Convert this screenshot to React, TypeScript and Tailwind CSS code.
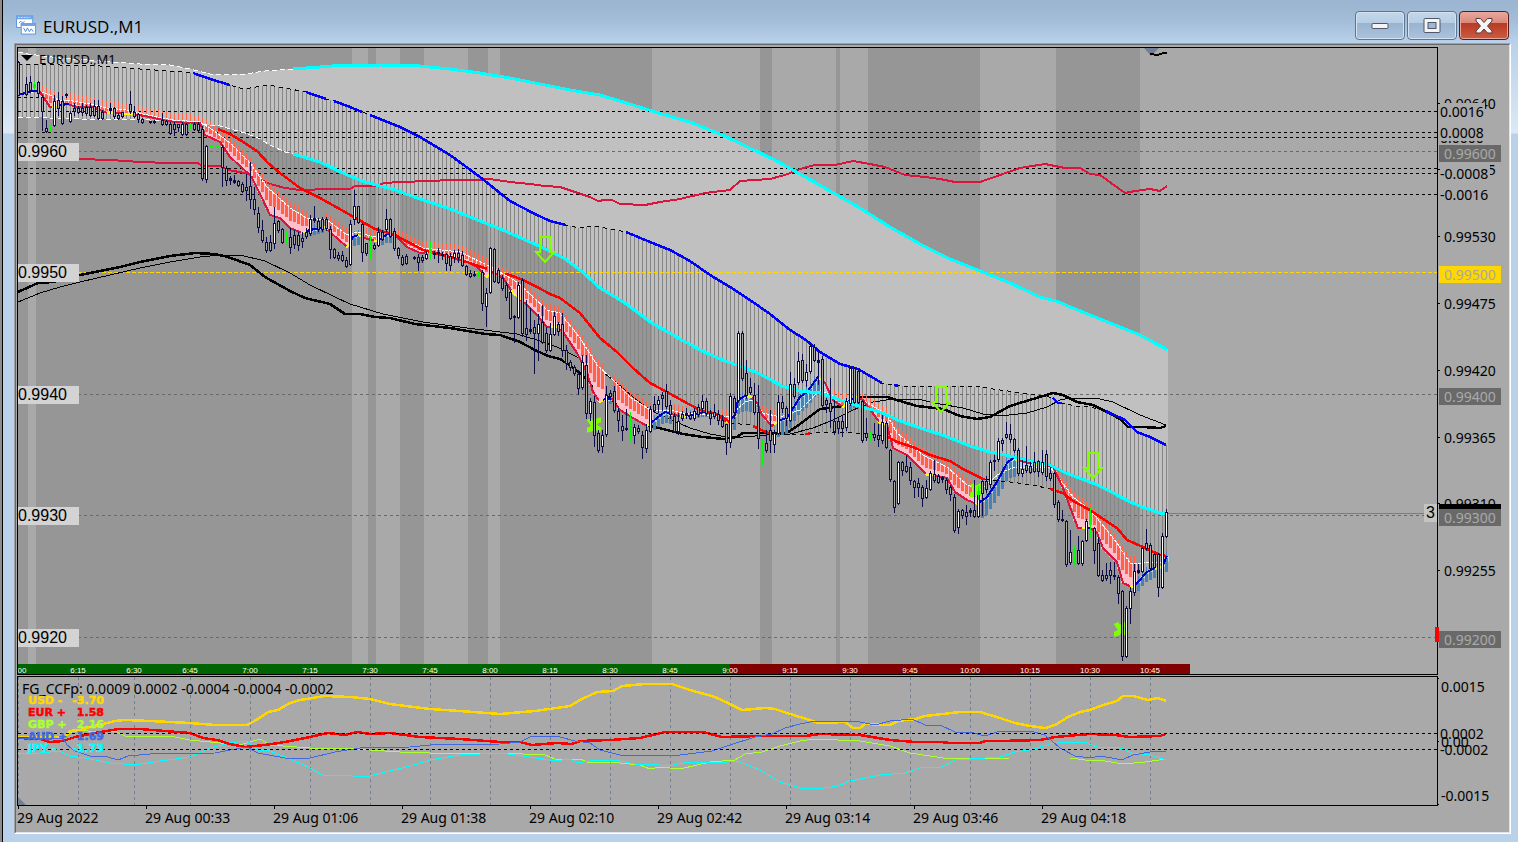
import React from "react";

type Pt = [number, number];

const parse = (s: string): Pt[] =>
  s.trim().split(/\s+/).map((p) => p.split(",").map(Number) as Pt);

const valueAt = (pts: Pt[], x: number): number => {
  if (x <= pts[0][0]) return pts[0][1];
  for (let i = 1; i < pts.length; i++) {
    if (x <= pts[i][0]) {
      const [x0, y0] = pts[i - 1];
      const [x1, y1] = pts[i];
      return y0 + ((y1 - y0) * (x - x0)) / (x1 - x0 || 1);
    }
  }
  return pts[pts.length - 1][1];
};

const slice = (s: string, from: number, to: number): string => {
  const pts = parse(s);
  const inner = pts.filter(([x]) => x > from && x < to);
  const all: Pt[] = [[from, valueAt(pts, from)], ...inner, [to, valueAt(pts, to)]];
  return all.map(([x, y]) => `${x},${y.toFixed(1)}`).join(" ");
};

const UPPER =
  "18,52 28,54 60,58 100,61 140,64 170,65 190,69 210,74 225,75 245,74 265,71 293,69 320,67 345,65 380,65 420,66 450,69 480,73 510,78 540,84 570,90 600,95 630,104 655,112 690,122 720,134 750,148 775,160 800,174 830,191 860,208 890,227 920,244 950,259 980,271 1010,283 1040,297 1056,301 1090,315 1115,325 1140,335 1166,349";
const LOWER =
  "18,117 40,117 50,118 80,119 120,119 150,120 180,122 200,124 220,126 245,133 258,138 270,145 285,152 293,154 320,162 345,174 365,182 395,190 423,200 450,209 480,221 505,231 530,242 548,250 565,259 580,270 600,288 625,303 650,322 680,339 700,350 725,361 740,366 760,374 782,386 800,391 820,393 840,400 862,407 880,412 900,421 920,428 945,436 970,446 990,452 1010,456 1030,461 1050,465 1066,473 1095,484 1115,494 1130,502 1145,508 1160,513 1166,514";
const MID =
  "18,64 60,65 100,66 140,69 170,71 193,73 210,79 230,85 240,88 250,88 268,85 285,88 306,92 326,99 334,101 350,107 362,112 375,117 400,127 420,137 450,155 480,177 510,201 535,214 550,221 566,225 580,228 595,226 610,229 626,232 650,242 670,250 690,261 710,275 730,287 750,300 770,314 790,330 806,340 820,352 840,364 858,369 870,376 882,383 900,386 915,386 935,386 960,386 980,387 1000,390 1015,392 1030,394 1045,396 1053,398 1058,403 1062,403 1075,406 1090,407 1106,411 1125,420 1137,432 1150,437 1166,445";
const BASE =
  "18,97 40,97 70,108 120,116 200,123 218,129 230,134 245,143 258,152 268,163 280,173 300,188 320,198 345,212 352,216 375,229 395,235 423,250 450,257 467,262 487,269 510,275 523,280 537,287 550,294 560,298 580,313 600,338 617,352 633,368 650,383 667,392 683,401 700,410 717,414 727,420 730,423 750,425 755,427 768,433 780,434 807,434 820,432 853,433 867,434 888,437 897,442 913,447 930,455 950,461 963,469 983,479 1010,482 1033,485 1050,489 1063,493 1073,501 1090,510 1100,517 1117,528 1127,540 1143,547 1160,555 1166,556";
const CRIMSON =
  "79,159 110,160 140,162 170,163 198,163 202,166 220,166 228,170 245,173 258,178 270,184 285,188 300,190 330,189 350,189 355,186 375,186 385,183 400,182 430,181 450,180 475,180 490,179 510,182 530,184 545,186 560,187 575,192 590,197 598,201 605,200 612,200 620,204 645,205 660,202 680,199 705,193 730,190 740,181 770,179 785,175 800,169 815,165 835,165 853,161 870,164 885,167 905,175 925,177 940,179 955,182 980,182 1000,175 1020,168 1045,164 1065,168 1080,168 1090,174 1100,175 1118,188 1125,193 1135,191 1150,189 1160,191 1167,186";
const THICK =
  "18,292 38,283 53,282 80,275 100,271 120,267 140,262 170,256 195,253 215,254 228,257 250,265 265,277 290,291 305,298 330,304 345,314 360,314 375,317 390,318 415,324 450,328 485,334 500,335 520,342 535,350 548,356 560,359 575,369 590,382 598,392 607,396 620,406 635,417 647,425 663,429 683,434 703,437 723,439 737,437 743,433 767,433 787,433 800,424 820,409 843,406 860,397 887,397 900,401 917,406 943,409 960,416 977,419 990,417 1010,406 1033,399 1053,393 1063,395 1077,402 1093,405 1107,412 1120,419 1128,427 1143,427 1160,428 1166,426";
const THIN =
  "18,302 40,293 60,287 80,282 110,275 140,268 170,262 200,257 220,255 240,255 265,261 290,273 310,285 335,297 350,304 383,314 423,322 467,328 517,334 537,340 557,347 577,357 600,370 617,383 633,397 650,410 667,418 690,428 710,434 727,437 743,437 767,435 790,434 813,428 833,420 853,410 873,402 893,399 917,399 940,404 963,408 983,414 1000,416 1027,413 1047,407 1060,400 1070,398 1100,399 1113,402 1140,415 1166,425";
const FAST =
  "18,95 33,91 40,92 50,107 57,106 67,104 77,107 93,107 107,113 133,114 150,117 167,121 187,123 200,123 205,135 220,142 230,157 250,175 253,180 262,198 270,215 280,218 290,228 302,233 310,230 325,227 330,232 347,247 353,237 358,235 367,239 377,241 388,234 393,235 397,237 407,247 420,253 430,252 447,257 463,260 477,267 487,277 493,272 503,278 513,293 527,305 537,315 547,327 557,327 563,332 577,353 587,373 593,392 600,402 605,399 612,399 620,410 633,418 647,426 657,418 665,412 675,415 683,417 697,414 703,412 713,413 727,422 735,415 738,400 745,396 750,396 757,403 762,415 772,426 780,420 787,418 800,397 807,392 818,377 825,383 833,400 843,407 850,400 857,397 863,400 880,423 887,425 893,448 907,455 927,475 933,475 947,478 955,492 967,500 977,504 987,497 997,482 1007,463 1013,458 1020,461 1030,463 1043,465 1053,467 1063,488 1070,507 1078,528 1088,528 1092,529 1097,533 1103,548 1117,562 1123,583 1132,587 1138,582 1147,572 1155,568 1162,567 1167,556";
const SLOW =
  "18,95 38,91 50,95 58,100 67,100 90,104 107,108 127,110 143,114 173,120 200,122 213,130 230,143 250,163 267,187 290,208 307,218 327,220 347,235 358,232 373,237 393,234 423,248 460,252 493,268 517,282 533,297 547,310 560,313 580,338 597,365 610,377 630,397 650,410 670,410 683,413 727,417 731,415 745,402 753,400 763,413 780,417 800,410 820,390 843,401 860,398 887,415 897,433 923,455 947,467 967,485 980,490 1000,473 1013,468 1050,467 1073,497 1090,510 1097,518 1117,543 1130,563 1143,563 1166,562";

const FAST_COLORS: [number, number, string][] = [
  [18, 38, "#0000cd"], [38, 52, "#dc143c"], [52, 60, "#ffff00"], [60, 69, "#0000cd"], [69, 107, "#dc143c"],
  [107, 114, "#ffff00"], [114, 121, "#dc143c"], [121, 134, "#ffff00"], [134, 301, "#dc143c"], [301, 307, "#ffff00"],
  [307, 323, "#0000cd"], [323, 328, "#ffff00"], [328, 346, "#dc143c"], [346, 351, "#ffff00"], [351, 358, "#0000cd"],
  [358, 363, "#ffff00"], [363, 374, "#dc143c"], [374, 379, "#ffff00"], [379, 393, "#0000cd"], [393, 427, "#dc143c"],
  [427, 433, "#ffff00"], [433, 445, "#dc143c"], [445, 451, "#ffff00"], [451, 485, "#dc143c"], [485, 490, "#ffff00"],
  [490, 511, "#dc143c"], [511, 521, "#ffff00"], [521, 550, "#dc143c"], [550, 558, "#ffff00"], [558, 599, "#dc143c"],
  [599, 603, "#ffff00"], [603, 611, "#0000cd"], [611, 647, "#dc143c"], [647, 651, "#ffff00"], [651, 669, "#0000cd"],
  [669, 680, "#dc143c"], [680, 688, "#ffff00"], [688, 706, "#0000cd"], [706, 726, "#dc143c"], [726, 731, "#ffff00"],
  [731, 746, "#0000cd"], [746, 752, "#ffff00"], [752, 774, "#dc143c"], [774, 778, "#ffff00"], [778, 819, "#0000cd"],
  [819, 823, "#ffff00"], [823, 842, "#dc143c"], [842, 846, "#ffff00"], [846, 856, "#0000cd"], [856, 860, "#ffff00"],
  [860, 879, "#dc143c"], [879, 887, "#ffff00"], [887, 926, "#dc143c"], [926, 934, "#ffff00"], [934, 975, "#dc143c"],
  [975, 979, "#ffff00"], [979, 1014, "#0000cd"], [1014, 1018, "#ffff00"], [1018, 1032, "#dc143c"], [1032, 1048, "#ffff00"],
  [1048, 1082, "#dc143c"], [1082, 1087, "#ffff00"], [1087, 1091, "#0000cd"], [1091, 1130, "#dc143c"], [1130, 1135, "#ffff00"],
  [1135, 1155, "#0000cd"], [1155, 1162, "#ffff00"], [1162, 1167, "#0000cd"],
];

// from, to, bar height of the rising histogram
const RISING: [number, number, number][] = [
  [307, 326, 4], [351, 363, 8], [379, 393, 6], [603, 612, 3], [651, 673, 8], [688, 712, 3], [731, 751, 13],
  [778, 822, 14], [847, 859, 8], [979, 1017, 16], [1135, 1160, 8], [1160, 1168, 14],
];

const BLUE_RANGES: [number, number][] = [
  [193, 230], [306, 326], [334, 362], [370, 566], [626, 882], [894, 898], [1053, 1062], [1106, 1166],
];
const RED_RANGES: [number, number][] = [
  [218, 487], [505, 730], [753, 770], [805, 810], [888, 985], [1050, 1166],
];

const BANDS: [number, number][] = [
  [18, 28], [36, 352], [368, 376], [400, 424], [468, 488], [500, 652], [760, 772], [836, 840], [868, 980], [1056, 1140],
];

// x : high, open/close top, open/close bottom, low ("w" marks a rising bar)
const CANDLES = `
18:61,62,95,95 26:77,84,94,95 30:76,82,90,92 38:81,82,93,96 42:95,97,111,130 46:120,128,131,132 54:95,101,125,126w
58:92,100,108,115 62:96,101,123,124 66:93,94,95,97 70:111,113,121,122w 74:103,108,111,115 78:106,108,112,113
82:103,108,112,115 86:105,107,113,115 90:103,107,115,116 94:100,106,115,116 98:100,106,118,119 102:110,112,118,119
110:103,108,110,113 114:107,108,116,118 118:113,115,118,119 122:112,112,116,117 130:91,104,111,113 134:106,112,116,117
138:113,114,119,122 142:118,119,122,123 150:121,121,122,123 154:120,121,122,123 162:113,120,124,125 166:120,121,124,125
170:122,124,133,134 174:122,124,129,135 178:124,124,127,131 182:122,124,134,135w 186:123,124,134,135 194:122,124,129,130
198:122,124,130,131 202:126,129,178,180 206:145,146,179,182w 222:145,147,167,186 226:166,168,180,185 230:176,178,180,184
234:175,180,182,183 238:180,181,185,186 242:182,184,191,192 246:174,187,190,200 250:162,186,199,208 254:187,199,209,214
258:207,213,227,232 262:220,230,240,242 266:237,242,250,252 270:235,242,250,251 274:207,223,243,248w 278:220,221,230,232
282:228,229,242,243 290:228,237,247,253 294:230,235,244,248 298:232,235,245,250 302:232,238,241,247 306:228,232,236,238
310:215,219,233,235w 314:206,218,220,222 318:218,221,229,231 322:217,219,229,231 326:217,219,228,230 330:226,229,249,258
334:248,249,257,258 338:252,255,258,260 342:251,255,260,261 346:257,260,266,267 350:220,224,264,265w 354:190,206,219,224w
358:206,206,222,223 362:223,224,252,261 366:245,243,253,255 374:243,245,248,249 378:227,232,245,246w 382:230,232,239,240
386:209,219,229,231w 390:218,219,236,237 394:228,231,248,250 398:247,248,255,258 402:255,257,264,265 406:254,256,263,264
414:256,257,258,259 418:254,257,262,270 422:255,257,260,262 426:251,254,258,259w 434:251,253,254,258 438:248,252,253,262
442:252,254,255,259 446:253,254,263,270 450:253,256,265,270 454:250,253,257,262w 458:249,253,257,262 462:251,255,265,266
466:265,266,274,275 470:270,273,276,277 474:271,274,275,276 482:270,272,303,310 486:288,293,306,326w 490:247,248,292,293w
494:248,249,281,282 498:268,270,282,283 502:275,278,288,290 506:282,285,297,300 510:290,292,318,319 514:315,316,317,342
518:282,285,317,318w 522:278,280,333,336 526:300,328,334,340 530:308,329,331,333 534:320,327,333,373 538:314,324,333,360w
542:305,322,342,343 546:327,333,350,352 550:323,334,350,351w 554:312,316,334,335w 558:322,324,331,335 562:313,324,350,356
566:345,350,363,369 570:360,362,367,370 574:365,367,373,375 578:370,374,388,394 582:355,362,387,389w 586:355,365,413,418
590:398,401,413,420w 594:396,402,435,446 598:430,433,450,452 602:430,435,446,452w 606:386,395,434,436w 610:390,393,396,397
614:386,391,410,412 618:408,411,420,431 622:415,426,430,440 626:409,428,429,430 634:424,427,435,443w 638:425,428,431,433
642:431,435,447,458 646:424,430,448,452w 650:406,409,431,432w 654:396,404,410,412 658:396,400,404,412w 662:392,395,398,410
666:384,391,406,408 670:400,405,414,418 674:413,416,431,432 678:413,421,431,434w 682:411,414,418,420 686:408,413,415,418
690:412,415,418,419 694:408,411,418,420w 698:404,407,414,416 702:395,401,408,412w 706:398,401,413,415 710:410,413,418,424
714:404,412,416,418 718:410,414,420,424 722:415,420,426,427 726:424,424,442,454 730:393,396,442,447w 734:396,398,412,418
738:331,333,400,402w 742:331,333,378,380 746:360,373,395,398 750:378,387,392,394 754:383,395,412,414 758:385,412,438,448
766:430,443,450,452 770:410,430,440,452 774:430,433,444,452w 778:395,402,433,434w 782:396,402,408,412 786:406,408,418,425
790:372,384,420,421w 794:378,384,396,398 798:352,361,382,384w 802:354,360,380,382 806:364,372,380,386w 810:344,346,371,373w
814:344,347,360,361 818:352,360,362,384 822:356,359,405,407 826:398,400,404,412 830:378,403,411,427 834:400,421,431,434
838:418,421,428,433 842:415,421,428,436 846:398,401,427,430w 850:366,368,403,405w 854:367,368,402,403 858:370,371,402,403
862:400,401,440,442 866:418,433,437,440 874:423,434,437,440 878:424,435,439,446 882:415,422,440,443w 886:421,423,447,448
890:449,450,479,481 894:480,481,507,512 898:461,462,503,504w 902:461,462,470,475 906:455,466,471,472 910:462,467,480,484
914:480,481,487,497 918:478,483,487,496 922:485,487,498,506 926:480,488,497,498w 930:471,473,489,490w 934:460,474,480,482
938:474,476,482,483 942:476,477,479,482 946:478,480,489,493 950:485,487,494,500 954:494,497,530,532 958:509,511,527,533w
962:509,510,515,518 966:505,512,516,524 970:508,510,512,516 974:480,510,516,517 978:491,493,516,517w 982:480,481,493,515
986:476,481,489,492 990:460,462,484,487w 994:455,460,461,470 998:438,441,459,461w 1002:438,440,443,450 1006:422,434,437,438
1010:424,434,439,442 1014:438,439,450,452 1018:448,450,473,475 1022:460,469,473,476w 1026:446,465,470,472 1030:462,466,472,473
1034:452,462,471,472 1038:460,461,471,476 1042:450,462,472,474w 1046:450,454,476,480 1050:467,473,478,480 1054:472,473,504,507
1058:500,502,519,521 1062:510,519,520,521 1066:520,521,564,566 1070:530,552,562,564w 1078:536,550,563,564 1082:540,541,563,565w
1086:519,521,540,541w 1094:527,528,550,563 1098:537,543,575,576 1102:570,575,580,581 1106:563,575,578,580 1110:562,570,575,583
1114:562,575,576,579 1118:575,577,593,603 1122:590,591,656,660 1126:606,608,656,657w 1130:587,591,608,623w 1134:564,571,592,595w
1138:564,570,572,573 1142:547,548,571,572w 1146:529,543,548,550 1150:543,545,568,570 1154:553,554,567,568 1158:553,554,587,596
1162:533,536,587,588w 1166:509,512,536,537w`
  .trim()
  .split(/\s+/)
  .map((c) => {
    const [x, rest] = c.split(":");
    const up = rest.endsWith("w");
    const [high, top, bottom, low] = rest.replace("w", "").split(",").map(Number);
    return { x: Number(x), high, top, bottom, low, up };
  });

const GREEN_BARS = [
  [34, 82, 90], [50, 125, 132], [190, 123, 130], [286, 231, 243], [370, 236, 259], [430, 242, 260], [478, 272, 277],
  [630, 412, 441], [762, 440, 465], [870, 431, 442], [978, 486, 500], [1074, 546, 566], [1090, 508, 537],
];

const TIME_MARKS: [number, string][] = [
  [22, "00"], [78, "6:15"], [134, "6:30"], [190, "6:45"], [250, "7:00"], [310, "7:15"], [370, "7:30"], [430, "7:45"],
  [490, "8:00"], [550, "8:15"], [610, "8:30"], [670, "8:45"], [730, "9:00"], [790, "9:15"], [850, "9:30"], [910, "9:45"],
  [970, "10:00"], [1030, "10:15"], [1090, "10:30"], [1150, "10:45"],
];

const LEVELS: [number, string, string][] = [
  [151, "0.9960", "#696969"], [272, "0.9950", "#ffd700"], [394, "0.9940", "#696969"], [515, "0.9930", "#696969"],
  [637, "0.9920", "#696969"],
];

const mid = parse(MID);
const base = parse(BASE);
const lowPts = parse(LOWER);
const fast = parse(FAST);
const slow = parse(SLOW);

const STEPS = Array.from({ length: 288 }, (_, i) => 18 + i * 4);

function Arrow({ x, y }: { x: number; y: number }) {
  return (
    <path
      d={`M${x - 5} ${y + 1}h10v15h4l-9 10l-9 -10h4z`}
      fill="none"
      stroke="#7fff00"
      strokeWidth="2"
    />
  );
}

function Cross({ x, y }: { x: number; y: number }) {
  return (
    <path
      d={`M${x - 5} ${y - 6}q2 4 5 6q2 -5 7 -5M${x - 7} ${y + 5}q5 0 7 -5q3 4 7 5`}
      fill="none"
      stroke="#7fff00"
      strokeWidth="5"
    />
  );
}

function Line({ points, color, width = 2.5, dash }: { points: string; color: string; width?: number; dash?: string }) {
  return (
    <polyline points={points} fill="none" stroke={color} strokeWidth={width} strokeDasharray={dash} shapeRendering="crispEdges" />
  );
}

function PriceChart() {
  return (
    <svg className="block h-full w-full" role="img" aria-label="EURUSD one minute chart">
      <g transform="translate(-18 -48)">
        <g shapeRendering="crispEdges">
          {BANDS.map(([a, b]) => (
            <rect key={a} x={a} y="48" width={b - a} height="616" fill="#969696" />
          ))}
          <polygon points={`${UPPER} ${[...lowPts].reverse().map((p) => p.join(",")).join(" ")}`} fill="#c0c0c0" />
          <rect x="1166" y="349" width="2" height="165" fill="#c0c0c0" />
          {STEPS.map((x) => {
            const a = valueAt(mid, x);
            const b = x < 218 ? valueAt(lowPts, x) : valueAt(base, x);
            return <rect key={x} x={x} y={Math.round(a)} width="1" height={Math.max(0, Math.round(b - a))} fill="#868686" />;
          })}
          {LEVELS.map(([y, , color]) => (
            <line key={y} x1="18" x2="110%" y1={y + 0.5} y2={y + 0.5} stroke={color} strokeDasharray={y === 272 ? "4 2" : "3 3"} />
          ))}
          {[111, 132, 137, 168, 173, 194].map((y) => (
            <line key={y} x1="18" x2="110%" y1={y + 0.5} y2={y + 0.5} stroke="#000" strokeDasharray="3 3" />
          ))}
          <line x1="18" x2="40" y1="97.5" y2="97.5" stroke="#000" strokeDasharray="3 3" />
          <line x1="1168" x2="110%" y1="513.5" y2="513.5" stroke="#708090" />
        </g>

        <Line points={slice(CRIMSON, 79, 1167)} color="#dc143c" width={2} />
        <Line points={THIN} color="#000" width={1} />
        <Line points={THICK} color="#000" />

        <g shapeRendering="crispEdges">
          {STEPS.filter((x) => x > 38).map((x) => {
            const f = valueAt(fast, x + 1);
            const w = valueAt(slow, x + 1);
            const rise = RISING.find(([a, b]) => x >= a && x < b);
            if (rise) {
              return (
                <React.Fragment key={x}>
                  <rect x={x - 1} y={Math.round(f)} width="4" height={Math.max(2, Math.round(w - f))} fill="#add8e6" />
                  <rect x={x} y={Math.round(f - 5)} width="1" height="8" fill="#4682b4" />
                  <rect x={x - 1} y={Math.round(f + 2)} width="3" height={rise[2]} fill="#4682b4" />
                </React.Fragment>
              );
            }
            const d = f - w;
            if (d >= 0) {
              return (
                <React.Fragment key={x}>
                  <rect x={x - 1} y={Math.round(w)} width="4" height={Math.round(d)} fill="#ffc0cb" />
                  <rect x={x} y={Math.round(w - 7)} width="1" height="9" fill="#ff6347" />
                  <rect x={x - 1} y={Math.round(w)} width="3" height={Math.max(3, Math.round(d * 0.6))} fill="#ff6347" />
                </React.Fragment>
              );
            }
            return <rect key={x} x={x - 1} y={Math.round(f)} width="4" height={Math.round(-d)} fill="#add8e6" />;
          })}
        </g>

        <Line points={SLOW} color="#fff" width={1} dash="3 1" />
        <Line points={slice(UPPER, 18, 293)} color="#fff" width={1} dash="5 3" />
        <Line points={slice(LOWER, 18, 293)} color="#fff" width={1} dash="5 3" />
        <Line points={MID} color="#000" width={1} dash="4 4" />
        <Line points={slice(BASE, 730, 888)} color="#000" width={1} dash="4 4" />
        <Line points={slice(BASE, 985, 1050)} color="#000" width={1} dash="4 4" />
        {FAST_COLORS.map(([a, b, c]) => (
          <Line key={a} points={slice(FAST, a, b)} color={c} width={2} />
        ))}
        {RED_RANGES.map(([a, b]) => (
          <Line key={a} points={slice(BASE, a, b)} color="#ff0000" />
        ))}
        {BLUE_RANGES.map(([a, b]) => (
          <Line key={a} points={slice(MID, a, b)} color="#0000ff" />
        ))}
        <Line points={slice(UPPER, 293, 1167)} color="#00ffff" width={3} />
        <Line points={slice(LOWER, 293, 1167)} color="#00ffff" width={3} />

        {[[545, 236], [941, 386], [1093, 452]].map(([x, y]) => (
          <Arrow key={x} x={x} y={y} />
        ))}
        {[[594, 425], [977, 490], [1121, 629]].map(([x, y]) => (
          <Cross key={x} x={x} y={y} />
        ))}

        <g shapeRendering="crispEdges">
          {CANDLES.map((c) => (
            <React.Fragment key={c.x}>
              <rect x={c.x} y={c.high} width="1" height={c.low - c.high + 1} fill="#0c0c48" />
              <rect x={c.x - 1} y={c.top} width="3" height={c.bottom - c.top + 1} fill="#0c0c48" />
              {c.bottom - c.top > 2 && (
                <rect x={c.x} y={c.top + 1} width="1" height={c.bottom - c.top - 1} fill={c.up ? "#ffffff" : "#a9a9a9"} />
              )}
            </React.Fragment>
          ))}
          {GREEN_BARS.map(([x, a, b]) => (
            <React.Fragment key={x}>
              <rect x={x} y={a} width="1" height={b - a} fill="#00ff00" />
              <rect x={x - 1} y={Math.round((a + b) / 2) - 2} width="3" height="4" fill="#00ff00" />
            </React.Fragment>
          ))}
          <line x1="209" x2="220" y1="146.5" y2="146.5" stroke="#00ff00" strokeDasharray="4 2" />
        </g>

        <polygon points="1144,48 1159,48 1151,56" fill="#708090" />
        <Line points="1150,54 1158,55 1163,53 1167,53" color="#000" width={2} />

        {LEVELS.map(([y, label]) => (
          <g key={label}>
            <rect x="18" y={y - 8} width="61" height="18" fill="#d3d3d3" />
            <text x="18" y={y + 6} className="fill-black font-['Liberation_Sans',sans-serif] text-[16px]">
              {label}
            </text>
          </g>
        ))}

        <rect x="18" y="664" width="712" height="10" fill="#006400" />
        <rect x="730" y="664" width="460" height="10" fill="#800000" />
        {TIME_MARKS.map(([x, label]) => (
          <text key={label} x={x} y="673" textAnchor="middle" className="fill-white font-['Liberation_Sans',sans-serif] text-[8px]">
            {label}
          </text>
        ))}

        <polygon points="21,55 33,55 27,61" fill="#000" />
        <text x="39" y="64" className="fill-black font-['Noto_Sans',sans-serif] text-[13px]">
          EURUSD.,M1
        </text>
      </g>
    </svg>
  );
}

const STRENGTH: { color: string; width: number; points: string }[] = [
  {
    color: "#adff2f",
    width: 1,
    points:
      "18,739 63,737 75,730 100,732 115,731 125,736 170,736 190,740 210,742 240,745 260,739 270,745 310,748 345,748 370,750 400,752 430,753 500,753 545,755 555,759 580,759 590,763 610,762 640,765 650,769 660,767 680,769 710,762 735,760 745,754 762,752 780,746 800,741 815,739 860,741 890,746 910,753 930,756 950,759 1010,758 1070,758 1085,760 1105,761 1123,764 1145,762 1166,759",
  },
  {
    color: "#00ffff",
    width: 1,
    points:
      "18,753 30,754 60,751 70,756 85,758 110,763 135,765 160,761 190,757 210,748 230,743 247,741 258,750 270,751 285,757 310,768 322,775 345,775 360,777 370,776 385,772 410,766 430,760 460,755 500,753 530,757 555,761 570,759 578,763 590,761 615,760 640,765 650,764 667,766 690,762 720,763 737,761 760,770 780,782 800,788 817,789 838,786 850,781 880,775 905,773 920,768 942,767 955,760 1000,757 1015,752 1030,750 1050,744 1065,742 1087,743 1097,747 1120,748 1132,753 1150,755 1166,760",
  },
  {
    color: "#ffd700",
    width: 2.5,
    points:
      "18,737 65,737 70,731 80,730 90,727 103,724 115,721 125,720 150,721 170,722 190,723 215,725 247,725 258,719 268,712 278,710 290,703 300,700 325,696 350,697 370,699 390,704 430,709 460,711 500,714 535,711 570,706 580,700 597,692 613,691 622,686 645,684 672,684 690,690 715,697 730,704 742,710 765,708 775,709 790,714 810,720 818,723 845,722 853,728 860,728 865,724 890,725 898,721 915,719 925,716 960,712 980,712 1000,718 1015,723 1030,726 1045,728 1055,725 1068,717 1080,712 1090,710 1103,705 1117,701 1123,696 1133,696 1148,700 1158,698 1166,701",
  },
  {
    color: "#ff0000",
    width: 2.5,
    points:
      "18,738 40,739 50,742 63,741 75,737 95,733 118,729 140,729 190,733 203,738 217,740 230,744 245,747 265,745 285,742 310,737 328,733 345,735 357,732 370,734 390,733 420,737 460,739 500,742 520,742 532,745 557,743 572,744 580,741 610,740 640,738 665,732 703,732 722,737 760,736 805,736 820,734 860,735 890,740 915,742 940,742 950,743 980,743 985,741 1000,741 1040,740 1055,737 1090,734 1115,735 1130,737 1160,736 1166,734",
  },
  {
    color: "#4169e1",
    width: 1,
    points:
      "18,739 63,738 67,745 75,751 90,756 108,757 118,760 128,756 150,754 215,753 230,750 247,747 258,753 285,758 310,758 335,752 360,748 410,747 430,745 500,744 520,742 532,736 560,737 575,741 590,743 600,750 620,755 680,755 712,751 730,745 755,737 772,734 785,728 800,724 815,721 845,722 855,721 875,725 890,721 912,719 925,725 940,725 955,732 970,732 985,736 1000,731 1030,731 1045,735 1060,748 1075,756 1090,758 1100,756 1112,758 1122,760 1133,755 1150,752 1166,751",
  },
];

const CURRENCIES: [string, string, string, number][] = [
  ["USD -", "-3.70", "#ffd700", 704],
  ["EUR +", "1.58", "#ff0000", 716],
  ["GBP +", "2.16", "#adff2f", 728],
  ["AUD +", "1.69", "#4169e1", 740],
  ["JPY -", "-1.73", "#00ffff", 752],
];

function StrengthChart() {
  return (
    <svg className="block h-full w-full" role="img" aria-label="Currency strength indicator">
      <g transform="translate(-18 -677)">
        {TIME_MARKS.map(([x], i) => (
          <line key={x} x1={(i ? x : 18) + 0.5} x2={(i ? x : 18) + 0.5} y1="677" y2="805" stroke="#708090" strokeDasharray="3 3" />
        ))}
        {STRENGTH.map((s) => (
          <Line key={s.color} points={s.points} color={s.color} width={s.width} />
        ))}
        <line x1="18" x2="110%" y1="733.5" y2="733.5" stroke="#000" strokeDasharray="3 3" />
        <line x1="18" x2="110%" y1="749.5" y2="749.5" stroke="#000" strokeDasharray="3 3" />
        <polygon points="18,797 26,805 18,805" fill="#708090" />
        <text x="22" y="694" className="fill-black font-['Noto_Sans',sans-serif] text-[14px]">
          FG_CCFp: 0.0009 0.0002 -0.0004 -0.0004 -0.0002
        </text>
        {CURRENCIES.map(([name, value, color, y]) => (
          <g key={name} fill={color} stroke={color} strokeWidth="0.5" className="font-['DejaVu_Sans',sans-serif] text-[11px] font-bold">
            <text x="28" y={y}>{name}</text>
            <text x="104" y={y} textAnchor="end">{value}</text>
          </g>
        ))}
      </g>
    </svg>
  );
}

const PRICE_AXIS: [number, string][] = [
  [237, "0.99530"], [304, "0.99475"], [371, "0.99420"], [438, "0.99365"], [504, "0.99310"], [571, "0.99255"],
];
const PRICE_TAGS: [number, string, string][] = [
  [145, "0.99600", "#696969"], [266, "0.99500", "#ffd700"], [388, "0.99400", "#696969"], [509, "0.99300", "#696969"],
  [631, "0.99200", "#696969"],
];

function AxisBox({ y, w = 45, label }: { y: number; w?: number; label: string }) {
  return (
    <g>
      <rect x="1440" y={y - 9} width={w} height="17" fill="#a9a9a9" />
      <text x="1440" y={y + 5}>{label}</text>
    </g>
  );
}

function PriceAxis() {
  return (
    <svg className="block h-[628px] w-full fill-black font-['Noto_Sans',sans-serif] text-[14px]">
      <g transform="translate(-1438 -47)">
        <text x="1444" y="109">0.99640</text>
        <text x="1444" y="175">0.99585</text>
        <AxisBox y={138} label="0.0000" />
        <AxisBox y={133} label="0.0008" />
        <AxisBox y={112} label="0.0016" />
        <AxisBox y={174} w={50} label="-0.0008" />
        <AxisBox y={195} w={50} label="-0.0016" />
        {PRICE_AXIS.map(([y, label]) => (
          <text key={label} x="1444" y={y + 5}>{label}</text>
        ))}
        {[103, 169, ...PRICE_AXIS.map(([y]) => y - 1)].map((y) => (
          <rect key={y} x="1438" y={y} width="2" height="1" />
        ))}
        <rect x="1439" y="504" width="62" height="5" />
        {PRICE_TAGS.map(([y, label, color]) => (
          <g key={label}>
            <rect x="1439" y={y} width="62" height="17" fill={color} />
            <text x="1444" y={y + 14} fill="#a9a9a9">{label}</text>
          </g>
        ))}
      </g>
    </svg>
  );
}

function StrengthAxis() {
  return (
    <svg className="block h-[130px] w-full fill-black font-['Noto_Sans',sans-serif] text-[14px]">
      <g transform="translate(-1438 -676)">
        <text x="1441" y="692">0.0015</text>
        <text x="1440" y="739">0.0002</text>
        <text x="1441" y="747">0.00</text>
        <text x="1440" y="755">-0.0002</text>
        <text x="1441" y="801">-0.0015</text>
        <rect x="1438" y="678" width="1" height="1" />
        <rect x="1438" y="741" width="1" height="1" />
        <rect x="1438" y="804" width="1" height="1" />
      </g>
    </svg>
  );
}

const DATES = [
  "29 Aug 2022", "29 Aug 00:33", "29 Aug 01:06", "29 Aug 01:38", "29 Aug 02:10", "29 Aug 02:42", "29 Aug 03:14",
  "29 Aug 03:46", "29 Aug 04:18",
];

function TitleIcon() {
  return (
    <svg className="h-5 w-[21px]" viewBox="0 0 22 20" aria-hidden="true">
      <rect x="0.5" y="0.5" width="17" height="12" fill="#fff" stroke="#5a96e0" />
      <rect x="0" y="0" width="18" height="4" fill="#6ea3ea" />
      <path d="M2 2h13" stroke="#d6e6fb" strokeDasharray="2 1" />
      <path d="M3 8l2 -2 2 2 2 -2" fill="none" stroke="#4b86dc" />
      <rect x="5.500" y="8.500" width="15" height="11" fill="#fff" stroke="#5a96e0" />
      <rect x="5" y="8" width="16" height="3" fill="#6ea3ea" />
      <path d="M8 13l2 4 2 -4 2 4 2 -3 2 3" fill="none" stroke="#4b86dc" />
    </svg>
  );
}

const WINDOW_BUTTON =
  "flex h-[29px] w-[50px] items-center justify-center rounded-sm border border-[#60748f] bg-[linear-gradient(#c3d7ea_0%,#b6cde4_42%,#9ab3cf_42%,#a9c3de_100%)] shadow-[inset_0_0_0_1px_#d5e3f1]";

export default function App() {
  return (
    <div className="flex min-h-screen border-l-2 border-[#8c8c8c] bg-[#b9d1ea]">
      <div className="flex min-w-0 flex-1 flex-col border-l border-black bg-[linear-gradient(#9ab4d1_0px,#a3bdd8_20px,#b9d1ea_43px,#dce8f5_133px,#b9d1ea_134px)]">
        <header className="flex h-[43px] items-center gap-1.5 pl-[13px] pr-[9px]">
          <div className="pt-1.5">
            <TitleIcon />
          </div>
          <h1 className="flex-1 pt-2.5 font-['Open_Sans','Noto_Sans',sans-serif] text-[17px] leading-6 text-black">EURUSD.,M1</h1>
          <div className="flex gap-0.5 pt-2">
            <button type="button" aria-label="Minimize" className={WINDOW_BUTTON}>
              <svg className="h-2 w-[18px]" viewBox="0 0 18 8">
                <rect x="1" y="1.500" width="16" height="5" rx="1" fill="#f4f4f4" stroke="#50586a" />
              </svg>
            </button>
            <button type="button" aria-label="Restore" className={WINDOW_BUTTON}>
              <svg className="h-4 w-[18px]" viewBox="0 0 18 16">
                <rect x="1" y="0.500" width="16" height="14" rx="1" fill="#f4f4f4" stroke="#50586a" />
                <rect x="5" y="4.500" width="8" height="6" fill="#9fb8d3" stroke="#50586a" />
              </svg>
            </button>
            <button
              type="button"
              aria-label="Close"
              className="flex h-[29px] w-[50px] items-center justify-center rounded-sm border border-[#5a1a1c] bg-[linear-gradient(#e8a79c_0%,#d98878_42%,#b93a23_42%,#cc5c44_100%)] shadow-[inset_0_0_0_1px_#e6a89c]"
            >
              <svg className="h-[18px] w-5" viewBox="0 0 20 18">
                <path d="M2 1.500h4.500L10 5.500l3.500 -4H18V4l-4.500 5 4.500 5v2h-4.500L10 12l-3.500 4H2v-2l4.500 -5L2 4z" fill="#f4f4f4" stroke="#54393c" />
              </svg>
            </button>
          </div>
        </header>

        <main className="mr-[7px] mb-2 ml-[11px] flex-1 border border-t-[#a0a0a0] border-r-white border-b-white border-l-[#a0a0a0]">
          <div className="flex h-full flex-col border border-t-[#696969] border-r-[#e3e3e3] border-b-[#e3e3e3] border-l-[#696969] bg-[#a9a9a9] pt-0.5 pl-px">
            <section className="grid grid-cols-[minmax(0,1fr)_71px]" aria-label="Price">
              <div className="relative h-[628px] border border-black">
                <PriceChart />
                <span className="absolute top-[456px] right-0 h-[18px] w-[13px] overflow-hidden bg-[#c4c4c4] pl-0.5 font-['Liberation_Sans',sans-serif] text-[16px] leading-[18px] text-black">
                  3
                </span>
                <span className="absolute top-[579px] -right-0.5 h-[15px] w-1 bg-[#ff0000]" />
              </div>
              <PriceAxis />
            </section>
            <section className="mt-px grid grid-cols-[minmax(0,1fr)_71px]" aria-label="Currency strength">
              <div className="h-[130px] border border-black">
                <StrengthChart />
              </div>
              <StrengthAxis />
            </section>
            <div className="flex h-[25px] overflow-hidden">
              {DATES.map((d) => (
                <div key={d} className="w-32 shrink-0">
                  <div className="ml-px h-[3px] w-px bg-black" />
                  <time className="block font-['Noto_Sans',sans-serif] text-[14px] leading-[18px] text-black">{d}</time>
                </div>
              ))}
            </div>
          </div>
        </main>
      </div>
    </div>
  );
}
